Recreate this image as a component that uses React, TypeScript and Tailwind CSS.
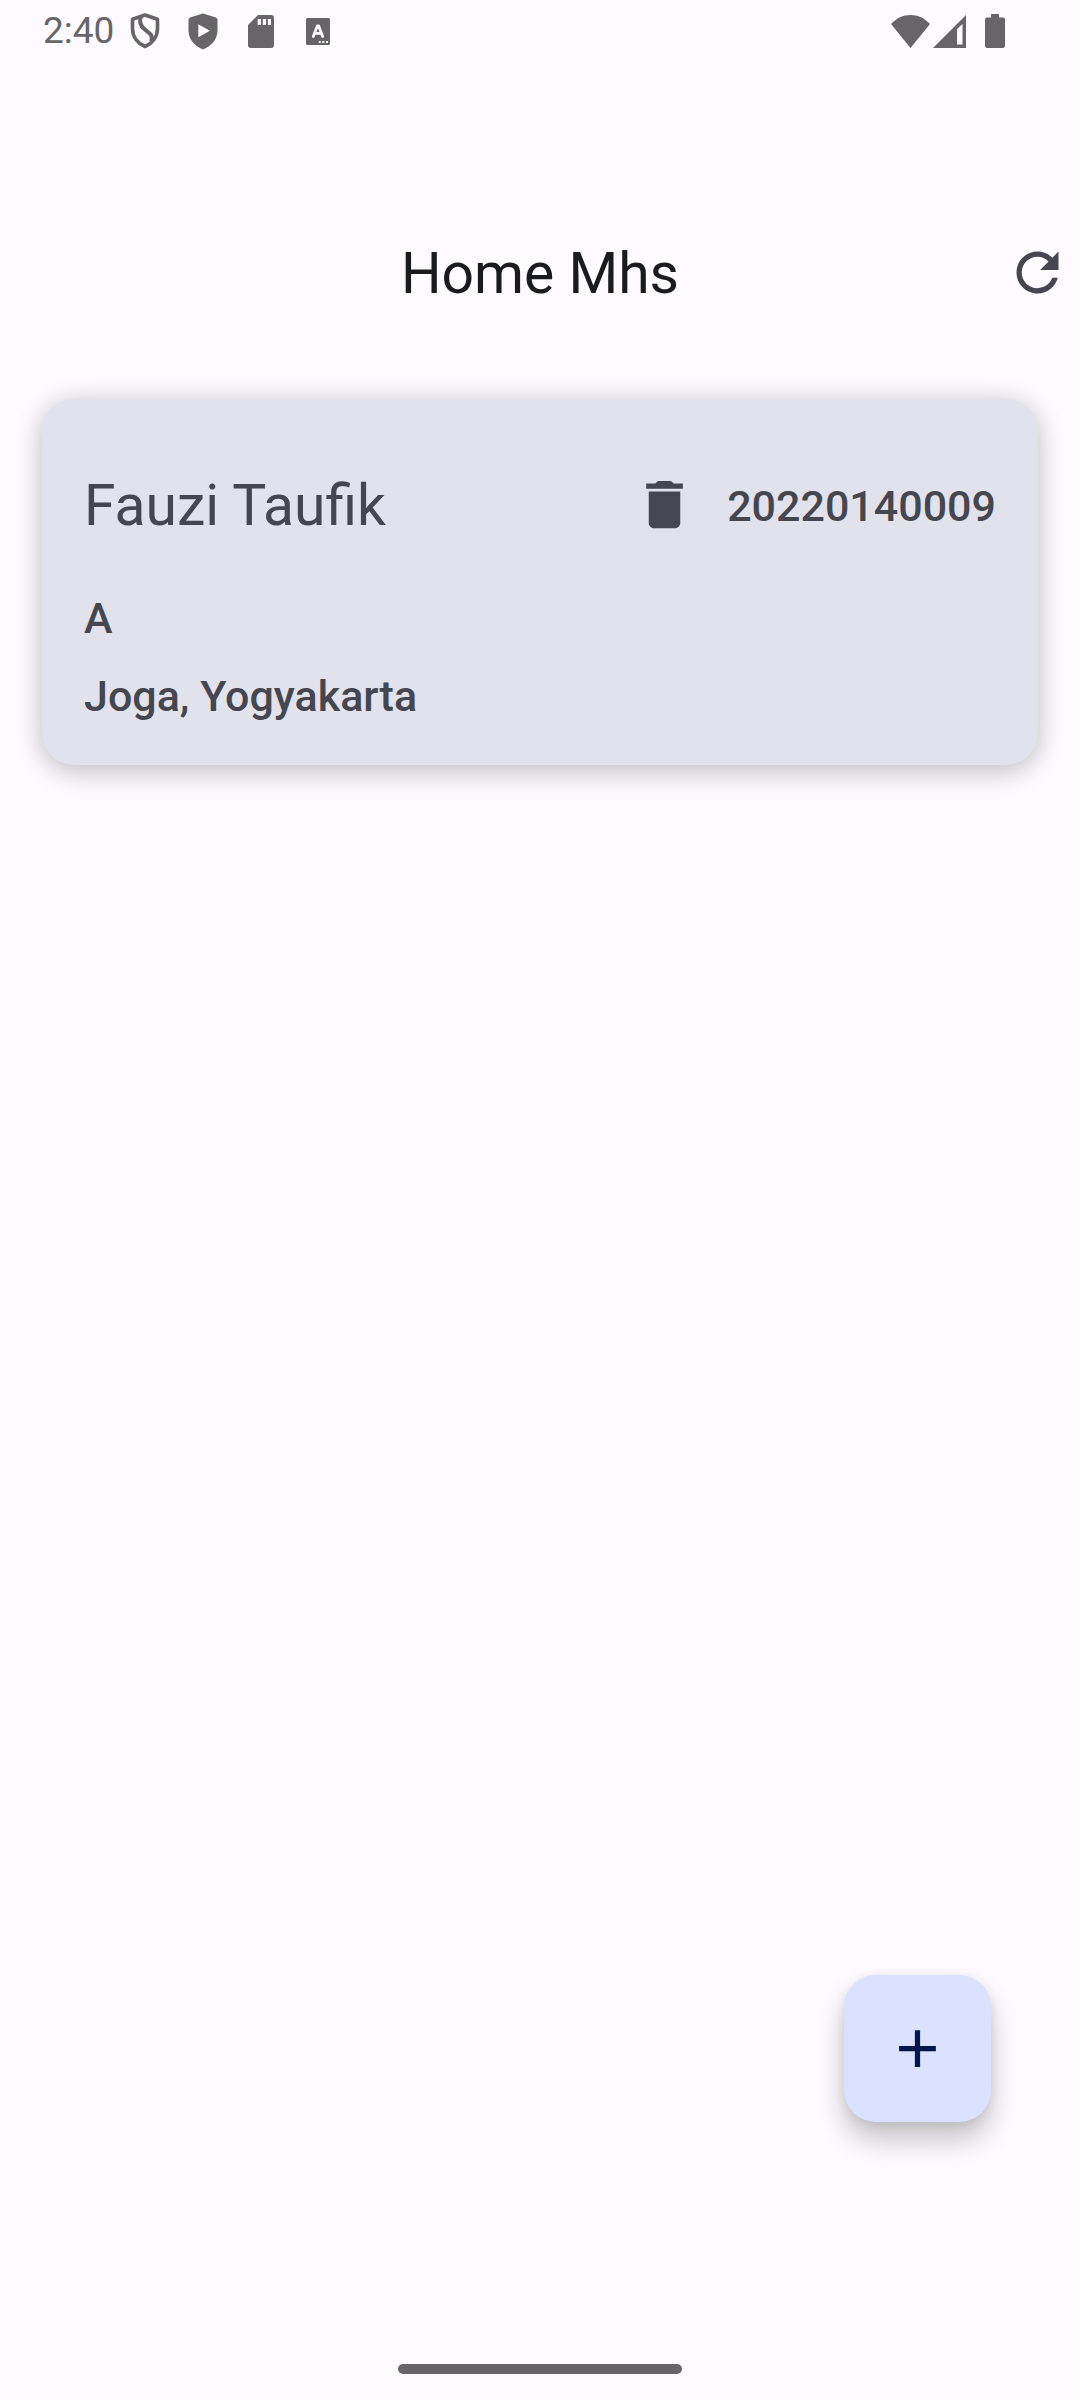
import React from "react";
import { MdAdd, MdDelete, MdRefresh } from "react-icons/md";

type Student = { nim: string; name: string; group: string; address: string };

const students: Student[] = [
  { nim: "20220140009", name: "Fauzi Taufik", group: "A", address: "Joga, Yogyakarta" },
];

function ShieldOutlineIcon() {
  return (
    <svg width="30" height="36" viewBox="0 0 30 36" fill="none" stroke="currentColor" aria-hidden="true">
      <path
        d="M15 2L27.5 6.2V15.5C27.5 24 22 30.500 15 33.500C8 30.500 2.500 24 2.500 15.500V6.200Z"
        strokeWidth="3.600"
        strokeLinejoin="round"
      />
      <path d="M10.800 3.500C9 9 10 12.500 14.500 16.200C20 20.300 23.500 22.500 21.200 28.500" strokeWidth="4" />
    </svg>
  );
}

function ShieldPlayIcon() {
  return (
    <svg width="30" height="37" viewBox="0 0 30 37" fill="currentColor" aria-hidden="true">
      <path
        fillRule="evenodd"
        d="M15 .5L28 4.6Q29.500 5.200 29.500 7V17C29.500 26.500 23.500 33 15 36.500C6.500 33 .5 26.500 .5 17V7Q.5 5.200 2 4.600ZM10.300 11.300V24.200L22 17.700Z"
      />
    </svg>
  );
}

function SdCardIcon() {
  return (
    <svg width="26" height="33" viewBox="0 0 26 33" fill="currentColor" aria-hidden="true">
      <path
        fillRule="evenodd"
        d="M10 0H23Q26 0 26 3V30Q26 33 23 33H3Q0 33 0 30V10ZM9.700 4V10H13V4ZM14.800 4V10H18V4ZM19.800 4V10H23V4Z"
      />
    </svg>
  );
}

function KeyboardBadgeIcon() {
  return (
    <svg width="24" height="27" viewBox="0 0 24 27" aria-hidden="true">
      <rect width="24" height="27" rx="1.500" fill="currentColor" />
      <g fill="none" stroke="#fdfbff" strokeWidth="2.800" strokeLinecap="round" strokeLinejoin="round">
        <path d="M7.300 18.500L11.300 8H12.700L16.700 18.500M9 15.300H15" />
      </g>
      <path fill="#fdfbff" d="M12.700 23h2v2h-2zM16.300 23h2v2h-2zM20 23h2v2h-2z" />
    </svg>
  );
}

function WifiIcon() {
  return (
    <svg width="39" height="33" viewBox="0 0 39 33" fill="currentColor" aria-hidden="true">
      <path d="M19.500 33L0 9C5.500 3.200 12 0 19.500 0S33.500 3.200 39 9Z" />
    </svg>
  );
}

function SignalIcon() {
  return (
    <svg width="33" height="33" viewBox="0 0 33 33" fill="currentColor" aria-hidden="true">
      <path fillRule="evenodd" d="M33 0V33H0ZM29.500 9L24 14V29.500H29.500Z" />
    </svg>
  );
}

function BatteryIcon() {
  return (
    <svg width="20" height="34" viewBox="0 0 20 34" fill="currentColor" aria-hidden="true">
      <path d="M6 0H14V3.500H18Q20 3.500 20 5.500V32Q20 34 18 34H2Q0 34 0 32V5.500Q0 3.500 2 3.500H6Z" />
    </svg>
  );
}

function StatusBar() {
  return (
    <div className="flex h-[62px] items-center justify-between pl-[43px] pr-[75px] text-[#676568]">
      <div className="flex items-center">
        <span className="mr-4 text-[37px] leading-[62px]">2:40</span>
        <div className="flex items-center gap-7">
          <ShieldOutlineIcon />
          <ShieldPlayIcon />
          <span className="flex items-center gap-8 pl-0.5">
            <SdCardIcon />
            <KeyboardBadgeIcon />
          </span>
        </div>
      </div>
      <div className="flex items-center">
        <WifiIcon />
        <span className="ml-[3px] mr-[19px]">
          <SignalIcon />
        </span>
        <BatteryIcon />
      </div>
    </div>
  );
}

function StudentCard({ student }: { student: Student }) {
  return (
    <article className="flex flex-col gap-6 rounded-[32px] bg-[#e1e2ec] p-[42px] text-[43px] font-medium leading-[54px] text-[#45464f] shadow-[0_8px_28px_rgba(0,0,0,0.17),0_0_28px_rgba(0,0,0,0.1)]">
      <div className="flex h-[126px] items-center">
        <h2 className="flex-1 pt-1 text-[57px] font-normal leading-[74px]">{student.name}</h2>
        <button type="button" aria-label={`Delete ${student.name}`} className="flex size-[126px] items-center justify-center">
          <MdDelete className="size-[63px]" />
        </button>
        <span className="pt-1">{student.nim}</span>
      </div>
      <p>{student.group}</p>
      <p>{student.address}</p>
    </article>
  );
}

export default function App() {
  return (
    <div className="flex min-h-screen flex-col bg-[#fdfbff] font-['Roboto',sans-serif]">
      <StatusBar />
      <header className="mt-[126px] grid h-[168px] grid-cols-[1fr_auto_1fr] items-center">
        <h1 className="col-start-2 pt-1 text-[57px] leading-[74px] text-[#1a1b20]">Home Mhs</h1>
        <button type="button" aria-label="Refresh" className="mr-[11px] justify-self-end text-[#45464f]">
          <MdRefresh className="size-[63px]" />
        </button>
      </header>
      <main className="flex flex-1 flex-col px-[42px] pt-[43px]">
        {students.map((s) => (
          <StudentCard key={s.nim} student={s} />
        ))}
        <button
          type="button"
          aria-label="Add student"
          className="mb-[242px] mr-[47px] mt-auto flex size-[147px] items-center justify-center self-end rounded-[32px] bg-[#dae2ff] text-[#001849] shadow-[0_18px_28px_rgba(0,0,0,0.22),0_2px_12px_rgba(0,0,0,0.08)]"
        >
          <MdAdd className="size-[63px]" />
        </button>
      </main>
      <div className="mb-[26px] h-2.5 w-[284px] self-center rounded-full bg-[#676568]" />
    </div>
  );
}
